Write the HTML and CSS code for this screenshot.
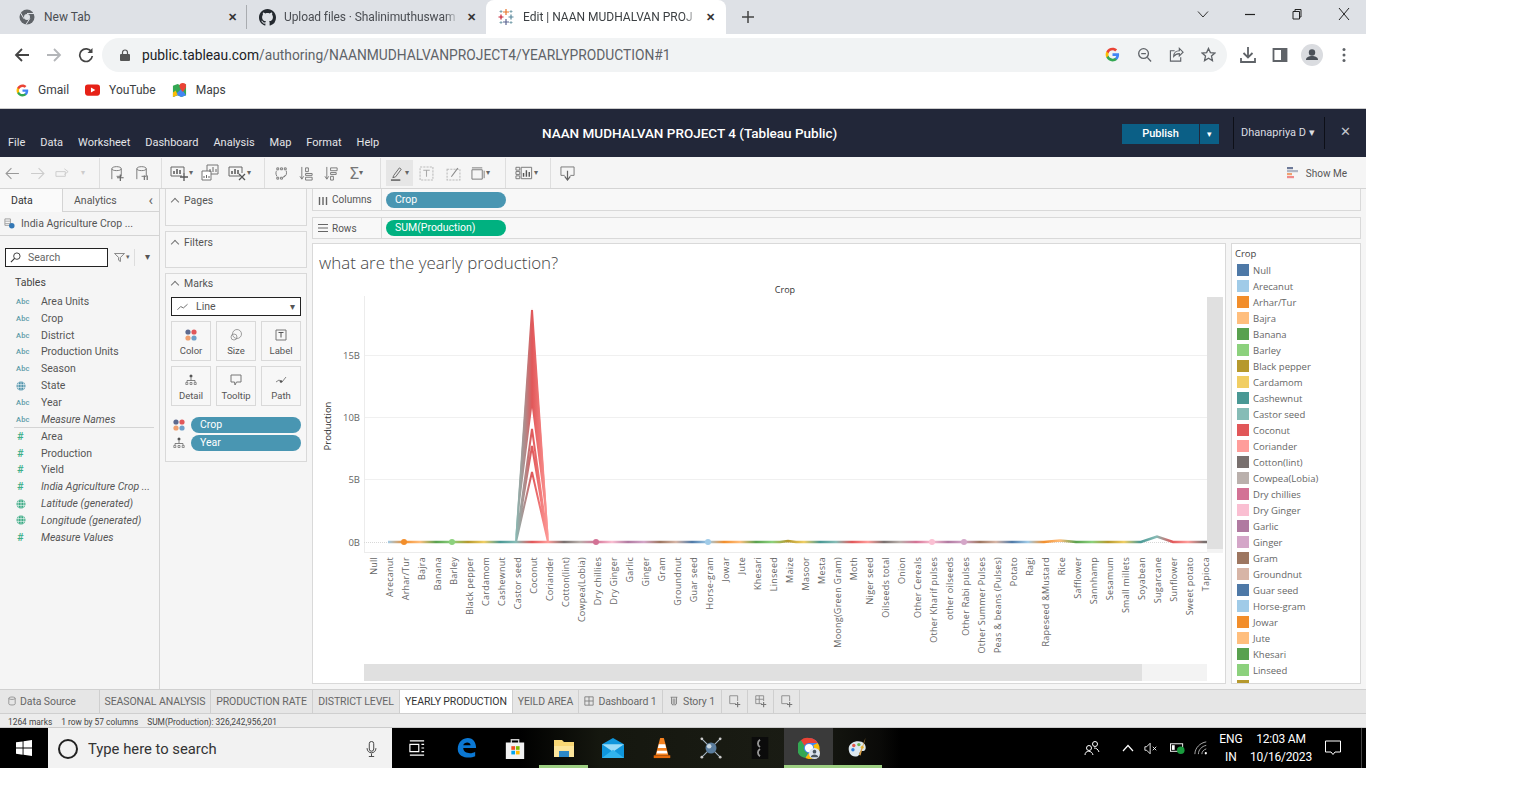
FILE: index.html
```html
<!DOCTYPE html>
<html lang="en">
<head>
<meta charset="utf-8">
<title>Edit | NAAN MUDHALVAN PROJECT 4</title>
<link rel="stylesheet" href="styles.css">
</head>
<body>
<svg class="defs" width="0" height="0" aria-hidden="true">
  <symbol id="g-logo" viewBox="0 0 48 48">
    <path fill="#4285f4" d="M45.12 24.5c0-1.56-.14-3.06-.4-4.5H24v8.51h11.84c-.51 2.75-2.06 5.08-4.39 6.64v5.52h7.11c4.16-3.83 6.56-9.47 6.56-16.17z"/>
    <path fill="#34a853" d="M24 46c5.94 0 10.92-1.97 14.56-5.33l-7.11-5.52c-1.97 1.32-4.49 2.1-7.45 2.1-5.73 0-10.58-3.87-12.31-9.07H4.34v5.7C7.96 41.07 15.4 46 24 46z"/>
    <path fill="#fbbc05" d="M11.69 28.18C11.25 26.86 11 25.45 11 24s.25-2.86.69-4.18v-5.7H4.34C2.85 17.09 2 20.45 2 24c0 3.55.85 6.91 2.34 9.88l7.35-5.7z"/>
    <path fill="#ea4335" d="M24 10.75c3.23 0 6.13 1.11 8.41 3.29l6.31-6.31C34.91 4.18 29.93 2 24 2 15.4 2 7.96 6.93 4.34 14.12l7.35 5.7c1.73-5.2 6.58-9.07 12.31-9.07z"/>
  </symbol>
  <symbol id="globe" viewBox="0 0 10 10">
    <circle cx="5" cy="5" r="4.5" fill="currentColor"/>
    <path d="M.5 3.6h9M.5 6.4h9M5 .5v9M3 1c-1.2 2.4-1.2 5.6 0 8M7 1c1.2 2.4 1.2 5.6 0 8" fill="none" stroke="#fff" stroke-width=".6"/>
  </symbol>
  <symbol id="dots" viewBox="0 0 12 12">
    <circle cx="3" cy="3" r="2.6" fill="#5d6a8f"/><circle cx="9" cy="3" r="2.6" fill="#e15759"/>
    <circle cx="3" cy="9" r="2.6" fill="#f0a070"/><circle cx="9" cy="9" r="2.6" fill="#6f9fc8"/>
  </symbol>
  <symbol id="tree" viewBox="0 0 12 12">
    <circle cx="6" cy="2" r="1.5" fill="#555"/>
    <path d="M6 3.5v3M2 8V6.5h8V8" fill="none" stroke="#666" stroke-width=".8"/>
    <path d="M.8 8.5h2v2h-2zM5 8.5h2v2H5zM9.2 8.5h2v2h-2z" fill="none" stroke="#666" stroke-width=".7"/>
  </symbol>
  <symbol id="cylinder" viewBox="0 0 18 18">
    <path d="M3 4c0-3 10-3 10 0v8H8M3 4v11M3 4c0 2.600 10 2.600 10 0" fill="none" stroke="#777"/>
  </symbol>
  <symbol id="chart-add" viewBox="0 0 20 18">
    <path d="M13 12H2V3h13v6" fill="none" stroke="#666"/>
    <path d="M5 10V7M8 10V5M11 10V6" stroke="#555" stroke-width="1.500"/>
  </symbol>
  <symbol id="tab-add" viewBox="0 0 16 16">
    <path d="M9 11H2V2h9v6" fill="none" stroke="#888"/>
    <path d="M11 9v6M8 12h6" stroke="#777" stroke-width="1.300"/>
  </symbol>
</svg>

<div class="screen">
  <nav class="tabstrip">
    <div class="tab tab-first">
      <svg class="tab-ico" viewBox="0 0 16 16"><circle cx="8" cy="8" r="7.500" fill="#5f6368"/><circle cx="8" cy="8" r="3" fill="#dee1e6"/><path d="M8 4.500h7M5 9.800 1.500 3.800M10.800 9.500 7 15.500" stroke="#dee1e6" stroke-width="1"/></svg>
      <span class="tab-text">New Tab</span><span class="tab-x">✕</span>
    </div>
    <div class="tab tab-second">
      <svg class="tab-ico gh" viewBox="0 0 16 16"><path fill="#24292f" d="M8 0C3.58 0 0 3.58 0 8c0 3.54 2.29 6.53 5.47 7.59.4.07.55-.17.55-.38 0-.19-.01-.82-.01-1.49-2.01.37-2.53-.49-2.69-.94-.09-.23-.48-.94-.82-1.13-.28-.15-.68-.52-.01-.53.63-.01 1.08.58 1.23.82.72 1.21 1.87.87 2.33.66.07-.52.28-.87.51-1.07-1.78-.2-3.64-.89-3.64-3.95 0-.87.31-1.59.82-2.15-.08-.2-.36-1.02.08-2.12 0 0 .67-.21 2.2.82.64-.18 1.32-.27 2-.27.68 0 1.36.09 2 .27 1.53-1.04 2.2-.82 2.2-.82.44 1.1.16 1.92.08 2.12.51.56.82 1.27.82 2.15 0 3.07-1.87 3.75-3.65 3.95.29.25.54.73.54 1.48 0 1.07-.01 1.93-.01 2.2 0 .21.15.46.55.38A8.013 8.013 0 0016 8c0-4.42-3.58-8-8-8z"/></svg>
      <span class="tab-text">Upload files · Shalinimuthuswam</span><span class="tab-x">✕</span>
    </div>
    <div class="tab tab-active">
      <svg class="tab-ico" viewBox="0 0 16 16"><path d="M8 0v6M5 3h6" stroke="#e8762d" stroke-width="1.200"/><path d="M8 10v6M5 13h6" stroke="#5b6591" stroke-width="1.200"/><path d="M3 5.500v5M.5 8h5" stroke="#c72035" stroke-width="1.200"/><path d="M13 5.500v5M10.500 8h5" stroke="#59879b" stroke-width="1.200"/><path d="M3 1v3M1.500 2.500h3M13 1v3M11.500 2.500h3M3 12v3M1.500 13.500h3M13 12v3M11.500 13.500h3" stroke="#7099a6" stroke-width=".8"/></svg>
      <span class="tab-text">Edit | NAAN MUDHALVAN PROJ</span><span class="tab-x">✕</span>
    </div>
    <svg class="new-tab" viewBox="0 0 12 12"><path d="M6 0v12M0 6h12" stroke="#444" stroke-width="1.500"/></svg>
    <div class="win-ctrl">
      <svg viewBox="0 0 12 12"><path d="M1 3.500 6 9l5-5.500" fill="none" stroke="#333"/></svg>
      <svg viewBox="0 0 12 12"><path d="M1 6.500h10" stroke="#222" stroke-width="1.200"/></svg>
      <svg viewBox="0 0 12 12"><path d="M2 3.500h6.500V11H2zM4 3.500V1.500h6V9H8.500" fill="none" stroke="#222"/></svg>
      <svg viewBox="0 0 12 12"><path d="M1 0 11 12M11 0 1 12" stroke="#222"/></svg>
    </div>
  </nav>

  <div class="addressbar">
    <svg class="nav-ico" viewBox="0 0 16 16"><path d="M15 8H2M8 2 2 8l6 6" fill="none" stroke="#444" stroke-width="1.800"/></svg>
    <svg class="nav-ico" viewBox="0 0 16 16"><path d="M1 8h13M8 2l6 6-6 6" fill="none" stroke="#b4b6b9" stroke-width="1.800"/></svg>
    <svg class="nav-ico" viewBox="0 0 16 16"><path d="M13.500 5A6.300 6.300 0 1 0 14.300 9" fill="none" stroke="#444" stroke-width="1.700"/><path d="M14.500 1v5h-5z" fill="#444"/></svg>
    <div class="omnibox">
      <svg class="lock" viewBox="0 0 10 12"><rect y="5" width="10" height="7" rx="1" fill="#555"/><path d="M2.500 5V3.500a2.500 2.500 0 0 1 5 0V5" fill="none" stroke="#555" stroke-width="1.200"/></svg>
      <span class="url"><b>public.tableau.com</b>/authoring/NAANMUDHALVANPROJECT4/YEARLYPRODUCTION#1</span>
      <div class="omni-icons">
        <svg viewBox="0 0 48 48"><use href="#g-logo"/></svg>
        <svg viewBox="0 0 16 16"><circle cx="7" cy="7" r="5.200" fill="none" stroke="#5f6368" stroke-width="1.400"/><path d="m11 11 4 4.500M4.500 7h5" stroke="#5f6368" stroke-width="1.400"/></svg>
        <svg viewBox="0 0 16 16"><path d="M6 4H1.500v11h11v-4M5 10c0-4 3-6 6-6V1.500l4 4-4 4V7C8.500 7 6.500 8 5 10z" fill="none" stroke="#5f6368" stroke-width="1.200"/></svg>
        <svg viewBox="0 0 16 16"><path d="m8 1.500 2 4.500 4.800.5-3.600 3.200 1 4.800L8 12l-4.200 2.500 1-4.800L1.200 6.500 6 6z" fill="none" stroke="#5f6368" stroke-width="1.400"/></svg>
      </div>
    </div>
    <div class="chrome-actions">
      <svg viewBox="0 0 16 16"><path d="M8 0v10M3.500 6 8 10.500 12.500 6M1 11v4h14v-4" fill="none" stroke="#5f6368" stroke-width="1.800"/></svg>
      <svg viewBox="0 0 16 16"><path d="M1.500 2h13v12h-13z" fill="none" stroke="#5f6368" stroke-width="1.800"/><path d="M9 2h5.500v12H9z" fill="#5f6368"/></svg>
      <svg class="avatar" viewBox="0 0 22 22"><circle cx="11" cy="11" r="11" fill="#dadce0"/><circle cx="11" cy="8.500" r="3.200" fill="#4a5058"/><path d="M5 16c0-3 3-4 6-4s6 1 6 4z" fill="#4a5058"/></svg>
      <svg viewBox="0 0 16 16"><circle cx="8" cy="2.500" r="1.500" fill="#5f6368"/><circle cx="8" cy="8" r="1.500" fill="#5f6368"/><circle cx="8" cy="13.500" r="1.500" fill="#5f6368"/></svg>
    </div>
  </div>

  <div class="bookmarks">
    <span class="bm"><svg viewBox="0 0 48 48"><use href="#g-logo"/></svg>Gmail</span>
    <span class="bm"><svg viewBox="0 0 16 12"><rect width="16" height="12" rx="3" fill="#e62117"/><path d="M6.300 3.300v5.400L11 6z" fill="#fff"/></svg>YouTube</span>
    <span class="bm"><svg viewBox="0 0 16 16"><path d="M1 3 6 1l4 2 5-2v12l-5 2-4-2-5 2z" fill="#34a853"/><path d="M1 15 10 6l5 7-5 2-4-2z" fill="#4285f4"/><path d="M6 13 1 15V10l3-2z" fill="#fbbc05"/><path d="M11.500 0a3.500 3.500 0 0 0-3.500 3.500C8 6 11.500 9.500 11.500 9.500S15 6 15 3.500A3.500 3.500 0 0 0 11.500 0z" fill="#ea4335"/></svg>Maps</span>
  </div>

  <header class="tb-header">
    <nav class="tb-menu"><span>File</span><span>Data</span><span>Worksheet</span><span>Dashboard</span><span>Analysis</span><span>Map</span><span>Format</span><span>Help</span></nav>
    <h1 class="tb-title">NAAN MUDHALVAN PROJECT 4 (Tableau Public)</h1>
    <div class="tb-right">
      <div class="publish"><span class="publish-main">Publish</span><span class="publish-caret">▾</span></div>
      <div class="tb-user">Dhanapriya D ▾</div>
      <span class="tb-close">✕</span>
    </div>
  </header>

  <div class="toolbar">
    <div class="tgroup g1">
      <span class="tool"><svg viewBox="0 0 14 14"><path d="M13 7H1M6 2 1 7l5 5" fill="none" stroke="#999"/></svg></span>
      <span class="tool"><svg viewBox="0 0 14 14"><path d="M1 7h12M8 2l5 5-5 5" fill="none" stroke="#ccc"/></svg></span>
      <span class="tool"><svg viewBox="0 0 16 14"><path d="M1 5h10v5H1zM10 2l4 3-4 3" fill="none" stroke="#ccc"/></svg></span>
      <span class="caret light">▾</span>
    </div>
    <div class="tgroup g2">
      <span class="tool"><svg viewBox="0 0 18 18"><use href="#cylinder"/><path d="M12 10v7M8.500 13.500h7" stroke="#666" stroke-width="1.300"/></svg></span>
      <span class="tool"><svg viewBox="0 0 18 18"><use href="#cylinder"/><path d="M11 11v5M14 11v5" stroke="#777" stroke-width="1.400"/></svg></span>
    </div>
    <div class="tgroup g3">
      <span class="tool wide"><svg viewBox="0 0 20 18"><use href="#chart-add"/><path d="M15 9v8M11 13h8" stroke="#555" stroke-width="1.300"/></svg><i class="caret">▾</i></span>
      <span class="tool wide"><svg viewBox="0 0 18 18"><path d="M6 1h11v9H6z" fill="none" stroke="#777"/><path d="M1 7h9v9H1z" fill="#fff" stroke="#777"/><path d="M9 8V5M12 8V3M15 8V5M3 14v-2M5.500 14v-3M8 14v-2" stroke="#666"/></svg></span>
      <span class="tool wide"><svg viewBox="0 0 20 18"><use href="#chart-add"/><path d="m12 10 6 6M18 10l-6 6" stroke="#555" stroke-width="1.300"/></svg><i class="caret">▾</i></span>
    </div>
    <div class="tgroup g4">
      <span class="tool"><svg viewBox="0 0 16 16"><path d="M3 2h2v2H3zM7 2h2v2H7zM11 2h2v2h-2zM3 12h2v2H3zM7 12h2v2H7zM13 5c1 3 0 6-3 7l1.500-2M3 11C1.500 8 2 6 3 5" fill="none" stroke="#777"/></svg></span>
      <span class="tool"><svg viewBox="0 0 16 16"><path d="M3 1v13M1 11l2 3 2-3" fill="none" stroke="#777"/><path d="M7 2h3v4H7zM7 8h7v2H7zM7 12h7v3H7z" fill="none" stroke="#777"/></svg></span>
      <span class="tool"><svg viewBox="0 0 16 16"><path d="M3 1v13M1 11l2 3 2-3" fill="none" stroke="#777"/><path d="M7 2h7v3H7zM7 7h6v2H7zM7 11h3v4H7z" fill="none" stroke="#777"/></svg></span>
      <span class="tool sigma">Σ<i class="caret">▾</i></span>
    </div>
    <div class="tgroup g5">
      <span class="tool active"><svg viewBox="0 0 16 16"><path d="m4 10 6-8 2 1.500-6 8-3 1z" fill="none" stroke="#666"/><path d="M1 15h10" stroke="#555" stroke-width="1.500"/></svg><i class="caret">▾</i></span>
      <span class="tool"><svg viewBox="0 0 14 14"><path d="M1 1h12v12H1z" fill="none" stroke="#bbb" stroke-dasharray="2 1"/><path d="M4 4h6M7 4v6" stroke="#aaa"/></svg></span>
      <span class="tool"><svg viewBox="0 0 14 14"><path d="M1 3h12v10H1z" fill="none" stroke="#bbb" stroke-dasharray="2 1"/><path d="M5 10l6-8" stroke="#888"/></svg></span>
      <span class="tool"><svg viewBox="0 0 16 14"><path d="M1 3h11v10H1zM1 1h11" fill="none" stroke="#777"/><path d="M14 4v8" stroke="#777"/></svg><i class="caret">▾</i></span>
    </div>
    <div class="tgroup g6">
      <span class="tool view-tool"><svg viewBox="0 0 20 14"><path d="M1 1h4v3H1zM1 5.500h4v3H1zM1 10h4v3H1z" fill="none" stroke="#777"/><path d="M6.500 1h11v12h-11z" fill="none" stroke="#777"/><path d="M9 11V7M12 11V4M15 11V6" stroke="#555" stroke-width="1.500"/></svg><i class="caret">▾</i></span>
    </div>
    <div class="tgroup g7">
      <span class="tool"><svg viewBox="0 0 16 16"><path d="M5 10H1V1h14v9h-4" fill="none" stroke="#777"/><path d="M8 5v9M5 11l3 4 3-4" fill="none" stroke="#666" stroke-width="1.300"/></svg></span>
    </div>
    <div class="showme">
      <svg viewBox="0 0 12 12"><rect width="6" height="2.200" fill="#6d7a99"/><rect y="3" width="11" height="2.200" fill="#b0b6c4"/><rect y="6" width="5" height="2.200" fill="#f0a070"/><rect y="9" width="7" height="2.200" fill="#ef8a8a"/></svg>
      Show Me
    </div>
  </div>

  <div class="workspace">
    <aside class="data-pane">
      <div class="pane-tabs">
        <span class="pane-tab pane-tab-on">Data</span>
        <span class="pane-tab">Analytics<i class="collapse">‹</i></span>
      </div>
      <div class="source">
        <svg viewBox="0 0 12 12"><path d="M1 1h6v7H1z" fill="none" stroke="#999"/><path d="M1 3.500h6M1 6h6" stroke="#aaa"/><circle cx="8.500" cy="8.500" r="3" fill="#3277b5"/></svg>
        India Agriculture Crop ...
      </div>
      <div class="search-row">
        <div class="search">
          <svg viewBox="0 0 12 12"><circle cx="7.500" cy="4.500" r="3.500" fill="none" stroke="#333"/><path d="M5 7 1 11" stroke="#333" stroke-width="1.200"/></svg>
          Search
        </div>
        <svg class="funnel" viewBox="0 0 12 10"><path d="M.5.500h11L7 5v4.500L5 8V5z" fill="none" stroke="#777"/></svg>
        <i class="caret">▾</i>
        <span class="search-more">▾</span>
      </div>
      <div class="tables-head">Tables</div>
      <ul class="fields">
        <li><span class="ty abc">Abc</span>Area Units</li>
        <li><span class="ty abc">Abc</span>Crop</li>
        <li><span class="ty abc">Abc</span>District</li>
        <li><span class="ty abc">Abc</span>Production Units</li>
        <li><span class="ty abc">Abc</span>Season</li>
        <li><span class="ty"><svg class="globe blue"><use href="#globe"/></svg></span>State</li>
        <li><span class="ty abc">Abc</span>Year</li>
        <li class="em"><span class="ty abc">Abc</span>Measure Names</li>
      </ul>
      <ul class="fields measures">
        <li><span class="ty num">#</span>Area</li>
        <li><span class="ty num">#</span>Production</li>
        <li><span class="ty num">#</span>Yield</li>
        <li class="em"><span class="ty num">#</span>India Agriculture Crop ...</li>
        <li class="em"><span class="ty"><svg class="globe green"><use href="#globe"/></svg></span>Latitude (generated)</li>
        <li class="em"><span class="ty"><svg class="globe green"><use href="#globe"/></svg></span>Longitude (generated)</li>
        <li class="em"><span class="ty num">#</span>Measure Values</li>
      </ul>
    </aside>

    <section class="cards">
      <div class="card card-small"><div class="card-head"><i class="chev"></i>Pages</div></div>
      <div class="card card-small"><div class="card-head"><i class="chev"></i>Filters</div></div>
      <div class="card card-marks">
        <div class="card-head"><i class="chev"></i>Marks</div>
        <div class="marktype">
          <svg viewBox="0 0 12 8"><path d="M.5 7 4 3.500 7 5l4.500-4" fill="none" stroke="#666"/></svg>
          <span>Line</span><span class="mt-caret">▾</span>
        </div>
        <div class="markgrid">
          <div class="markbtn"><svg viewBox="0 0 12 12"><use href="#dots"/></svg>Color</div>
          <div class="markbtn"><svg viewBox="0 0 12 12"><circle cx="7" cy="5" r="4.500" fill="none" stroke="#888" stroke-width=".8"/><circle cx="4" cy="8" r="3" fill="none" stroke="#888" stroke-width=".8"/></svg>Size</div>
          <div class="markbtn"><svg viewBox="0 0 12 12"><path d="M1 1h10v10H1z" fill="none" stroke="#777"/><path d="M3.500 3.500h5M6 3.500v5" stroke="#555"/></svg>Label</div>
          <div class="markbtn"><svg viewBox="0 0 12 12"><use href="#tree"/></svg>Detail</div>
          <div class="markbtn"><svg viewBox="0 0 12 12"><path d="M1 1h10v7H6.500L5 11 4.500 8H1z" fill="none" stroke="#777"/></svg>Tooltip</div>
          <div class="markbtn"><svg viewBox="0 0 12 12"><path d="M1 8l3-2 3 2 4-5" fill="none" stroke="#666" stroke-width=".8"/><circle cx="6" cy="7.500" r="1.300" fill="#555"/></svg>Path</div>
        </div>
        <div class="markpill"><svg viewBox="0 0 12 12"><use href="#dots"/></svg><span class="pill pill-blue">Crop</span></div>
        <div class="markpill"><svg viewBox="0 0 12 12"><use href="#tree"/></svg><span class="pill pill-blue">Year</span></div>
      </div>
    </section>

    <main class="view">
      <div class="shelf">
        <div class="shelf-label"><svg viewBox="0 0 10 10"><path d="M1.500 2v8M5 2v8M8.500 2v8" stroke="#666" stroke-width="1.400"/></svg>Columns</div>
        <span class="pill pill-blue pill-wide">Crop</span>
      </div>
      <div class="shelf">
        <div class="shelf-label"><svg viewBox="0 0 10 10"><path d="M0 1.500h10M0 5h10M0 8.500h10" stroke="#666" stroke-width="1.200"/></svg>Rows</div>
        <span class="pill pill-green pill-wide">SUM(Production)</span>
      </div>
      <div class="viz-row">
        <div class="viz">
          <h2 class="viz-title">what are the yearly production?</h2>
          <svg class="chart" viewBox="313 284 912 399" preserveAspectRatio="none">
            <defs>
              <linearGradient id="base" gradientUnits="userSpaceOnUse" x1="372" y1="0" x2="1204" y2="0">
                <stop offset="0" stop-color="#4e79a7"/><stop offset=".0192" stop-color="#a0cbe8"/><stop offset=".0385" stop-color="#f28e2b"/><stop offset=".0577" stop-color="#ffbe7d"/><stop offset=".0769" stop-color="#59a14f"/><stop offset=".0962" stop-color="#8cd17d"/><stop offset=".1154" stop-color="#b6992d"/><stop offset=".1346" stop-color="#f1ce63"/><stop offset=".1538" stop-color="#499894"/><stop offset=".1731" stop-color="#86bcb6"/><stop offset=".1923" stop-color="#e15759"/><stop offset=".2115" stop-color="#ff9d9a"/><stop offset=".2308" stop-color="#79706e"/><stop offset=".25" stop-color="#bab0ac"/><stop offset=".2692" stop-color="#d37295"/><stop offset=".2885" stop-color="#fabfd2"/><stop offset=".3077" stop-color="#b07aa1"/><stop offset=".3269" stop-color="#d4a6c8"/><stop offset=".3462" stop-color="#9d7660"/><stop offset=".3654" stop-color="#d7b5a6"/>
                <stop offset=".3846" stop-color="#4e79a7"/><stop offset=".4038" stop-color="#a0cbe8"/><stop offset=".4231" stop-color="#f28e2b"/><stop offset=".4423" stop-color="#ffbe7d"/><stop offset=".4615" stop-color="#59a14f"/><stop offset=".4808" stop-color="#8cd17d"/><stop offset=".5" stop-color="#b6992d"/><stop offset=".5192" stop-color="#f1ce63"/><stop offset=".5385" stop-color="#499894"/><stop offset=".5577" stop-color="#86bcb6"/><stop offset=".5769" stop-color="#e15759"/><stop offset=".5962" stop-color="#ff9d9a"/><stop offset=".6154" stop-color="#79706e"/><stop offset=".6346" stop-color="#bab0ac"/><stop offset=".6538" stop-color="#d37295"/><stop offset=".6731" stop-color="#fabfd2"/><stop offset=".6923" stop-color="#b07aa1"/><stop offset=".7115" stop-color="#d4a6c8"/><stop offset=".7308" stop-color="#9d7660"/><stop offset=".75" stop-color="#d7b5a6"/>
                <stop offset=".7692" stop-color="#4e79a7"/><stop offset=".7885" stop-color="#a0cbe8"/><stop offset=".8077" stop-color="#f28e2b"/><stop offset=".8269" stop-color="#ffbe7d"/><stop offset=".8462" stop-color="#59a14f"/><stop offset=".8654" stop-color="#8cd17d"/><stop offset=".8846" stop-color="#b6992d"/><stop offset=".9038" stop-color="#f1ce63"/><stop offset=".9231" stop-color="#499894"/><stop offset=".9423" stop-color="#86bcb6"/><stop offset=".9615" stop-color="#e15759"/><stop offset=".9808" stop-color="#ff9d9a"/><stop offset="1" stop-color="#79706e"/>
              </linearGradient>
              <linearGradient id="spike" gradientUnits="userSpaceOnUse" x1="515" y1="0" x2="549" y2="0">
                <stop offset="0" stop-color="#86bcb6"/><stop offset=".3" stop-color="#b08a8a"/><stop offset=".5" stop-color="#e15759"/><stop offset="1" stop-color="#ff9d9a"/>
              </linearGradient>
            </defs>
            <text class="col-head" x="785" y="293">Crop</text>
            <g class="grid">
              <path d="M364 355.500H1207M364 417.500H1207M364 479.500H1207"/>
              <path class="axis" d="M364.500 296V552M364 552.500H1207"/>
              <path class="zero" d="M364 542.500H1207"/>
            </g>
            <g class="yticks">
              <text x="360" y="359">15B</text><text x="360" y="421">10B</text><text x="360" y="483">5B</text><text x="360" y="546">0B</text>
            </g>
            <text class="ytitle" transform="translate(331 426) rotate(-90)">Production</text>
            <path class="line-base" d="M388 542H780L788 541 796 542H1044L1060 540.500 1076 542H1141L1157 536.500 1173 542H1220"/>
            <path class="spike-fill" d="M515 542 532 308 549 542 532 408z"/>
            <path class="spike-line" d="M516 542 532 429 548 542M516 542 532 446 548 542M516 542 532 472 548 542M516 542 532 310 548 542"/>
            <circle cx="404" cy="542" r="3" fill="#f28e2b"/><circle cx="452" cy="542" r="3" fill="#8cd17d"/><circle cx="596" cy="542" r="3" fill="#d37295"/><circle cx="708" cy="542" r="3" fill="#a0cbe8"/><circle cx="932" cy="542" r="3" fill="#fabfd2"/><circle cx="964" cy="542" r="3" fill="#d4a6c8"/>
            <g class="xlabels">
              <text transform="translate(377 557) rotate(-90)">Null</text><text transform="translate(393 557) rotate(-90)">Arecanut</text><text transform="translate(409 557) rotate(-90)">Arhar/Tur</text><text transform="translate(425 557) rotate(-90)">Bajra</text><text transform="translate(441 557) rotate(-90)">Banana</text><text transform="translate(457 557) rotate(-90)">Barley</text><text transform="translate(473 557) rotate(-90)">Black pepper</text><text transform="translate(489 557) rotate(-90)">Cardamom</text><text transform="translate(505 557) rotate(-90)">Cashewnut</text><text transform="translate(521 557) rotate(-90)">Castor seed</text><text transform="translate(537 557) rotate(-90)">Coconut</text><text transform="translate(553 557) rotate(-90)">Coriander</text><text transform="translate(569 557) rotate(-90)">Cotton(lint)</text><text transform="translate(585 557) rotate(-90)">Cowpea(Lobia)</text><text transform="translate(601 557) rotate(-90)">Dry chillies</text><text transform="translate(617 557) rotate(-90)">Dry Ginger</text><text transform="translate(633 557) rotate(-90)">Garlic</text><text transform="translate(649 557) rotate(-90)">Ginger</text><text transform="translate(665 557) rotate(-90)">Gram</text><text transform="translate(681 557) rotate(-90)">Groundnut</text><text transform="translate(697 557) rotate(-90)">Guar seed</text><text transform="translate(713 557) rotate(-90)">Horse-gram</text><text transform="translate(729 557) rotate(-90)">Jowar</text><text transform="translate(745 557) rotate(-90)">Jute</text><text transform="translate(761 557) rotate(-90)">Khesari</text><text transform="translate(777 557) rotate(-90)">Linseed</text><text transform="translate(793 557) rotate(-90)">Maize</text><text transform="translate(809 557) rotate(-90)">Masoor</text><text transform="translate(825 557) rotate(-90)">Mesta</text><text transform="translate(841 557) rotate(-90)">Moong(Green Gram)</text><text transform="translate(857 557) rotate(-90)">Moth</text><text transform="translate(873 557) rotate(-90)">Niger seed</text><text transform="translate(889 557) rotate(-90)">Oilseeds total</text><text transform="translate(905 557) rotate(-90)">Onion</text><text transform="translate(921 557) rotate(-90)">Other Cereals</text><text transform="translate(937 557) rotate(-90)">Other Kharif pulses</text><text transform="translate(953 557) rotate(-90)">other oilseeds</text><text transform="translate(969 557) rotate(-90)">Other Rabi pulses</text><text transform="translate(985 557) rotate(-90)">Other Summer Pulses</text><text transform="translate(1001 557) rotate(-90)">Peas &amp; beans (Pulses)</text><text transform="translate(1017 557) rotate(-90)">Potato</text><text transform="translate(1033 557) rotate(-90)">Ragi</text><text transform="translate(1049 557) rotate(-90)">Rapeseed &amp;Mustard</text><text transform="translate(1065 557) rotate(-90)">Rice</text><text transform="translate(1081 557) rotate(-90)">Safflower</text><text transform="translate(1097 557) rotate(-90)">Sannhamp</text><text transform="translate(1113 557) rotate(-90)">Sesamum</text><text transform="translate(1129 557) rotate(-90)">Small millets</text><text transform="translate(1145 557) rotate(-90)">Soyabean</text><text transform="translate(1161 557) rotate(-90)">Sugarcane</text><text transform="translate(1177 557) rotate(-90)">Sunflower</text><text transform="translate(1193 557) rotate(-90)">Sweet potato</text><text transform="translate(1209 557) rotate(-90)">Tapioca</text>
            </g>
            <rect class="sb-track" x="1207" y="297" width="16" height="256"/>
            <rect class="sb-thumb" x="1207" y="297" width="16" height="252"/>
            <rect class="sb-track" x="364" y="664" width="843" height="17"/>
            <rect class="sb-thumb" x="364" y="664" width="778" height="17"/>
          </svg>
        </div>
        <aside class="legend">
          <div class="legend-title">Crop</div>
          <ul class="legend-list">
            <li><i class="sw c1"></i>Null</li><li><i class="sw c2"></i>Arecanut</li><li><i class="sw c3"></i>Arhar/Tur</li><li><i class="sw c4"></i>Bajra</li><li><i class="sw c5"></i>Banana</li><li><i class="sw c6"></i>Barley</li><li><i class="sw c7"></i>Black pepper</li><li><i class="sw c8"></i>Cardamom</li><li><i class="sw c9"></i>Cashewnut</li><li><i class="sw c10"></i>Castor seed</li><li><i class="sw c11"></i>Coconut</li><li><i class="sw c12"></i>Coriander</li><li><i class="sw c13"></i>Cotton(lint)</li><li><i class="sw c14"></i>Cowpea(Lobia)</li><li><i class="sw c15"></i>Dry chillies</li><li><i class="sw c16"></i>Dry Ginger</li><li><i class="sw c17"></i>Garlic</li><li><i class="sw c18"></i>Ginger</li><li><i class="sw c19"></i>Gram</li><li><i class="sw c20"></i>Groundnut</li><li><i class="sw c1"></i>Guar seed</li><li><i class="sw c2"></i>Horse-gram</li><li><i class="sw c3"></i>Jowar</li><li><i class="sw c4"></i>Jute</li><li><i class="sw c5"></i>Khesari</li><li><i class="sw c6"></i>Linseed</li><li class="legend-cut"><i class="sw c7"></i></li>
          </ul>
        </aside>
      </div>
    </main>
  </div>

  <div class="sheetbar">
    <span class="sheet ds"><svg viewBox="0 0 10 12"><path d="M1 2.500c0-2 8-2 8 0v7c0 2-8 2-8 0zM1 2.500c0 2 8 2 8 0" fill="none" stroke="#888"/></svg>Data Source</span>
    <span class="sheet s1">SEASONAL ANALYSIS</span>
    <span class="sheet s2">PRODUCTION RATE</span>
    <span class="sheet s3">DISTRICT LEVEL</span>
    <span class="sheet s4 on">YEARLY PRODUCTION</span>
    <span class="sheet s5">YEILD AREA</span>
    <span class="sheet s6"><svg viewBox="0 0 12 12"><path d="M1 1h10v10H1zM6 1v10M1 6h10" fill="none" stroke="#777"/></svg>Dashboard 1</span>
    <span class="sheet s7"><svg viewBox="0 0 12 12"><path d="M2 1.500h8M3 1.500v8l2 1.500V3M9 1.500v8L7 11V3" fill="none" stroke="#777"/></svg>Story 1</span>
    <span class="sheet add"><svg viewBox="0 0 16 16"><use href="#tab-add"/></svg></span>
    <span class="sheet add"><svg viewBox="0 0 16 16"><use href="#tab-add"/><path d="M2 6h9M6 2v9" stroke="#888"/></svg></span>
    <span class="sheet add"><svg viewBox="0 0 16 16"><use href="#tab-add"/></svg></span>
  </div>
  <div class="statusbar"><span>1264 marks</span><span>1 row by 57 columns</span><span>SUM(Production): 326,242,956,201</span></div>

  <footer class="taskbar">
    <svg class="win" viewBox="0 0 16 16"><path d="M0 2.300 6.600 1.400v6.200H0zM7.500 1.300 16 0v7.600H7.500zM0 8.500h6.600v6.200L0 13.700zM7.500 8.500H16V16l-8.500-1.200z" fill="#fff"/></svg>
    <div class="tsearch">
      <i class="cortana"></i>
      <span>Type here to search</span>
      <svg class="mic" viewBox="0 0 12 18"><rect x="3.500" y=".5" width="5" height="11" rx="2.500" fill="none" stroke="#333"/><path d="M1 8c0 7 10 7 10 0M6 14v3M3 17.500h6" fill="none" stroke="#333"/></svg>
    </div>
    <div class="tapps">
      <span class="tapp"><svg viewBox="0 0 18 18"><path d="M1 1h16M1 17h16M1 5h10v8H1zM14 5h3M14 9h3M14 13h3" fill="none" stroke="#fff" stroke-width="1.300"/></svg></span>
      <span class="tapp"><svg viewBox="0 0 24 24"><path d="M3 13C3 5 9 1 14 1c6 0 9 5 9 11H9c0 6 9 7 13 4v5c-6 3-19 2-19-8zm6-4h8c0-4-7-4-8 0z" fill="#0b78d4"/></svg></span>
      <span class="tapp"><svg viewBox="0 0 20 24"><path d="M6 7V3h8v4" fill="none" stroke="#ccc" stroke-width="1.500"/><rect y="6" width="20" height="18" fill="#f2f2f2"/><rect x="6" y="10" width="4" height="4" fill="#f25022"/><rect x="11" y="10" width="4" height="4" fill="#7fba00"/><rect x="6" y="15" width="4" height="4" fill="#00a4ef"/><rect x="11" y="15" width="4" height="4" fill="#ffb900"/></svg></span>
      <span class="tapp run"><svg viewBox="0 0 22 22"><path d="M1 3h8l2 2h10v15H1z" fill="#f8d775"/><path d="M1 9h20v11H1z" fill="#fce59b"/><rect x="6" y="14" width="10" height="6" fill="#2d89c8"/></svg></span>
      <span class="tapp"><svg viewBox="0 0 24 22"><path d="M0 7 12 0l12 7v15H0z" fill="#0f96dc"/><path d="M0 7l12 8 12-8" fill="#9bdcf7"/><path d="M0 22l12-9 12 9z" fill="#31b4ee"/></svg></span>
      <span class="tapp"><svg viewBox="0 0 20 24"><path d="M8 1h4l5 19H3z" fill="#f58220"/><path d="M6.500 8h7l1 4h-9zM4.800 15h10.400l.8 3H4z" fill="#fff"/><path d="M1 20h18v3H1z" fill="#e66a0a"/></svg></span>
      <span class="tapp"><svg viewBox="0 0 24 24"><path d="M2 2l20 20M22 2 2 22" stroke="#a5b4c2" stroke-width="1.200"/><circle cx="12" cy="12" r="6" fill="#5a7d9e"/><circle cx="10" cy="10" r="2.500" fill="#c8d6e0"/><circle cx="2" cy="2" r="1.500" fill="#ccc"/><circle cx="22" cy="2" r="1.500" fill="#ccc"/><circle cx="2" cy="22" r="1.500" fill="#ccc"/><circle cx="22" cy="22" r="1.500" fill="#ccc"/></svg></span>
      <span class="tapp"><svg viewBox="0 0 18 24"><rect width="18" height="24" fill="#0b0b0b"/><path d="M9 3c-3 2-3 6 0 8M9 13c-3 2-3 6 0 8" fill="none" stroke="#999" stroke-width="2"/></svg></span>
      <span class="tapp run hi"><svg viewBox="0 0 24 24"><circle cx="12" cy="12" r="11" fill="#4285f4"/><path d="M12 1a11 11 0 0 1 9.500 5.500H12a5.500 5.500 0 0 0-5 3L3 3.500A11 11 0 0 1 12 1z" fill="#ea4335"/><path d="M3 3.500 7 9.500a5.500 5.500 0 0 0 4 8l-3 5.500A11 11 0 0 1 3 3.500z" fill="#34a853"/><path d="M21.500 6.500A11 11 0 0 1 8 23l4-5.500a5.500 5.500 0 0 0 4.500-8.500z" fill="#fbbc05"/><circle cx="12" cy="12" r="4.500" fill="#fff"/><circle cx="18" cy="18" r="6" fill="#dbe4ee"/><circle cx="18" cy="16" r="2" fill="#47545f"/><path d="M14 22c0-2 2-3 4-3s4 1 4 3z" fill="#47545f"/></svg></span>
      <span class="tapp run"><svg viewBox="0 0 26 26"><path d="M2 14C2 8 8 5 13 5c6 0 10 4 9 9-1 4-4 2-6 3s0 5-5 6c-6 1-9-4-9-9z" fill="#dce7ee"/><circle cx="8" cy="10" r="2" fill="#e2574c"/><circle cx="14" cy="9" r="2" fill="#6bb34f"/><circle cx="7" cy="15" r="2" fill="#2f7ed8"/><circle cx="18" cy="12" r="1.800" fill="#f2c230"/><path d="M22 1 14 21l2 1z" fill="#d8a049"/></svg></span>
    </div>
    <div class="tray">
      <svg class="tr-people" viewBox="0 0 16 16"><circle cx="11" cy="4" r="2.500" fill="none" stroke="#fff"/><circle cx="5" cy="8" r="2.500" fill="none" stroke="#fff"/><path d="M1 15c0-5 7-5 8 0M10 8c2 0 4 1 5 4" fill="none" stroke="#fff"/></svg>
      <svg class="tr-up" viewBox="0 0 12 8"><path d="m1 7 5-5.500L11 7" fill="none" stroke="#fff" stroke-width="1.200"/></svg>
      <svg class="tr-vol" viewBox="0 0 16 14"><path d="M1 5h2l4-4v12L3 9H1zM10 5l4 4M14 5l-4 4" fill="none" stroke="#fff"/></svg>
      <svg class="tr-bat" viewBox="0 0 16 14"><rect x=".5" y="2.500" width="13" height="8" fill="none" stroke="#fff"/><rect x="2" y="4" width="3" height="5" fill="#fff"/><circle cx="11.500" cy="9.500" r="4" fill="#1a9c3e"/></svg>
      <svg class="tr-wifi" viewBox="0 0 16 16"><path d="M1 15C1 8 7 2 14 1M5 15c0-5 4-9 9-10M9 15c0-3 2-5 5-6" fill="none" stroke="#bbb"/><circle cx="13.500" cy="14" r="1.300" fill="#fff"/></svg>
      <div class="tr-lang"><span>ENG</span><span>IN</span></div>
      <div class="tr-time"><span>12:03 AM</span><span>10/16/2023</span></div>
      <svg class="tr-note" viewBox="0 0 16 16"><path d="M.5 1h15v11H10l-2 2.500L6 12H.5z" fill="none" stroke="#fff"/></svg>
    </div>
  </footer>
</div>
</body>
</html>
```
FILE: styles.css
```css
* { box-sizing: border-box; }
html, body { margin: 0; padding: 0; background: #fff; }
body { font-family: Roboto, "Open Sans", "Liberation Sans", sans-serif; color: #333; overflow: hidden; }
ul { list-style: none; margin: 0; padding: 0; }
i { font-style: normal; }
h1, h2 { margin: 0; font-weight: normal; }
.defs { position: absolute; }
.screen { width: 1366px; height: 768px; display: flex; flex-direction: column; overflow: hidden; }

/* browser tabs */
.tabstrip { height: 34px; background: #dee1e6; display: flex; align-items: stretch; flex: none; }
.tab { display: flex; align-items: center; font-size: 12px; color: #4a4d52; height: 34px; }
.tab-first { width: 247px; padding: 0 9px 0 19px; border-right: 1px solid #a9acb0; height: 24px; margin-top: 5px; }
.tab-second { width: 239px; padding: 0 10px 0 12px; height: 24px; margin-top: 5px; }
.tab-active { width: 240px; padding: 0 11px 0 12px; background: #fff; border-radius: 8px 8px 0 0; color: #3c4043; }
.tab-ico { width: 16px; height: 16px; flex: none; margin-right: 9px; }
.gh { width: 17px; height: 17px; margin-right: 8px; }
.tab-text { flex: 1; white-space: nowrap; overflow: hidden; }
.tab-second .tab-text { letter-spacing: -.1px; }
.tab-second .tab-text, .tab-active .tab-text { -webkit-mask-image: linear-gradient(90deg, #000 calc(100% - 14px), transparent); mask-image: linear-gradient(90deg, #000 calc(100% - 14px), transparent); }
.tab-x { flex: none; font-size: 11px; color: #333; margin-left: 8px; font-weight: 700; }
.new-tab { width: 12px; height: 12px; margin: 11px 0 0 16px; flex: none; }
.win-ctrl { margin-left: auto; display: flex; gap: 35px; padding: 8px 16px 0 0; }
.win-ctrl svg { width: 12px; height: 12px; }

/* address bar */
.addressbar { height: 41px; display: flex; align-items: center; flex: none; padding-left: 14px; background: #fff; }
.nav-ico { width: 16px; height: 16px; margin-right: 16px; flex: none; }
.omnibox { width: 1125px; height: 34px; margin-left: -8px; border-radius: 17px; background: #f1f3f4; display: flex; align-items: center; padding: 0 11px 0 18px; }
.lock { width: 10px; height: 12px; margin-right: 12px; flex: none; }
.url { font-size: 13.800px; color: #5f6368; white-space: nowrap; }
.url b { font-weight: 400; color: #202124; }
.omni-icons { margin-left: auto; display: flex; gap: 17px; align-items: center; }
.omni-icons svg { width: 15px; height: 15px; }
.chrome-actions { display: flex; align-items: center; gap: 16px; margin-left: 13px; }
.chrome-actions svg { width: 16px; height: 16px; }
.chrome-actions .avatar { width: 22px; height: 22px; margin: 0 -3px; }

/* bookmarks */
.bookmarks { height: 34px; flex: none; display: flex; align-items: center; gap: 16px; padding: 0 0 3px 16px; font-size: 12px; color: #3c4043; background: #fff; border-bottom: 1px solid #ccc; }
.bm { display: flex; align-items: center; gap: 9px; }
.bm svg { width: 13px; height: 13px; }
.bm:nth-child(2) svg { width: 15px; height: 12px; }
.bm:nth-child(3) svg { width: 15px; height: 15px; }

/* tableau header */
.tb-header { height: 48px; flex: none; background: #222739; color: #fff; display: flex; position: relative; }
.tb-menu { display: flex; gap: 15px; padding: 27px 0 0 8px; font-size: 11px; color: #e4e5e8; }
.tb-title { position: absolute; left: 542px; top: 16px; font-size: 13.500px; font-weight: 500; color: #fff; white-space: nowrap; }
.tb-right { margin-left: auto; display: flex; align-items: center; font-size: 11px; }
.publish { display: flex; height: 20px; margin-top: 1px; }
.publish-main { width: 77px; background: #0b5f86; text-align: center; line-height: 20px; font-weight: 500; }
.publish-caret { width: 19px; margin-left: 1px; background: #0b5f86; text-align: center; line-height: 20px; font-size: 9px; }
.tb-user { height: 32px; margin-left: 14px; padding: 0 10px 0 7px; border-left: 1px solid #0d0f17; border-right: 1px solid #0d0f17; line-height: 32px; color: #dcdde1; width: 92px; white-space: nowrap; }
.tb-close { width: 41px; text-align: center; color: #c4c6cd; font-size: 13px; margin-top: -3px; }

/* tableau toolbar */
.toolbar { height: 32px; flex: none; background: #f5f5f5; border-bottom: 1px solid #d4d4d4; display: flex; align-items: center; padding-top: 1px; }
.tgroup { display: flex; align-items: center; height: 30px; border-right: 1px solid #dedede; }
.g1 { width: 100px; }
.g2 { width: 62px; padding-left: 5px; }
.g3 { width: 103px; padding-left: 5px; gap: 1px; }
.g4 { width: 116px; padding-left: 4px; }
.g5 { width: 125px; padding-left: 5px; }
.g6 { width: 45px; padding-left: 3px; }
.g7 { width: 40px; padding-left: 4px; border-right: 0; }
.tool { width: 25px; height: 26px; display: flex; align-items: center; justify-content: center; flex: none; }
.tool svg { width: 15px; height: 15px; }
.g2 .tool svg { width: 17px; height: 17px; }
.g5 .tool { width: 27px; }
.g5 .tool svg { width: 15px; height: 15px; }
.tool.wide { width: 28px; }
.tool.wide svg { width: 20px; height: 18px; }
.tool.active { background: #e6e6e6; }
.tool.view-tool { width: 34px; }
.tool.view-tool svg { width: 19px; height: 14px; }
.sigma { font-size: 16px; color: #777; }
.caret { font-size: 8px; color: #666; line-height: 1; }
.caret.light { color: #ccc; width: 15px; text-align: center; }
.showme { margin-left: auto; padding-right: 19px; display: flex; align-items: center; gap: 7px; font-size: 10px; color: #555; }
.showme svg { width: 12px; height: 12px; }

/* workspace */
.workspace { height: 500px; flex: none; display: flex; background: #f5f5f5; }
.data-pane { width: 160px; flex: none; border-right: 1px solid #d4d4d4; font-size: 10.500px; color: #555; }
.pane-tabs { display: flex; height: 23px; }
.pane-tab { display: flex; align-items: center; border-bottom: 1px solid #d4d4d4; padding-left: 11px; width: 96px; color: #555; position: relative; }
.pane-tab-on { width: 63px; border-right: 1px solid #d4d4d4; border-bottom: 0; color: #333; background: #fafafa; }
.collapse { position: absolute; right: 6px; top: 2px; font-size: 15px; color: #666; }
.source { height: 24px; display: flex; align-items: center; gap: 6px; padding-left: 4px; border-bottom: 1px solid #d4d4d4; }
.source svg { width: 11px; height: 11px; }
.search-row { display: flex; align-items: center; margin: 12px 0 0 5px; height: 19px; }
.search { width: 103px; height: 19px; border: 1px solid #222; background: #fff; display: flex; align-items: center; gap: 7px; padding-left: 4px; color: #666; }
.search svg { width: 11px; height: 11px; }
.funnel { width: 11px; height: 9px; margin-left: 6px; }
.search-row .caret { margin-left: 1px; font-size: 7px; }
.search-more { margin-left: 4px; padding-left: 10px; border-left: 1px solid #ddd; height: 17px; line-height: 16px; color: #555; font-size: 10px; }
.tables-head { margin: 9px 0 0 15px; height: 14px; line-height: 14px; color: #444; }
.fields { margin: 3px 5px 0 14px; }
.fields li { height: 16.850px; display: flex; align-items: center; white-space: nowrap; }
.fields .em { font-style: italic; }
.measures { margin-top: -1px; border-top: 1px solid #d4d4d4; }
.ty { width: 27px; flex: none; display: flex; align-items: center; padding-left: 2px; font-style: normal; }
.abc { font-size: 7.500px; color: #5d9ba8; letter-spacing: .2px; font-weight: 500; }
.num { font-size: 11px; color: #3bae88; padding-left: 3px; font-weight: 500; }
.globe { width: 10px; height: 10px; }
.globe.blue { color: #4c90a8; }
.globe.green { color: #36a781; }

/* cards */
.cards { width: 152px; flex: none; padding: 0 5px; display: flex; flex-direction: column; gap: 5px; font-size: 10.500px; color: #555; border-right: 0; }
.card { background: #f7f7f7; border: 1px solid #d9d9d9; }
.card-small { height: 37px; }
.card-small:first-child { border-top: 0; }
.card-head { height: 21px; display: flex; align-items: center; padding-left: 6px; gap: 6px; color: #555; }
.card-small:first-child .card-head { height: 22px; }
.chev { width: 6px; height: 6px; border-left: 1px solid #777; border-top: 1px solid #777; transform: rotate(45deg); margin-top: 3px; }
.card-marks { height: 189px; padding: 0 5px; }
.card-marks .card-head { padding-left: 1px; height: 19px; }
.marktype { height: 19px; border: 1px solid #222; background: #fff; display: flex; align-items: center; padding: 0 5px 0 5px; gap: 8px; color: #555; margin-top: 4px; }
.marktype svg { width: 11px; height: 8px; }
.mt-caret { margin-left: auto; font-size: 10px; color: #555; }
.markgrid { display: grid; grid-template-columns: repeat(3, 40px); grid-auto-rows: 40px; gap: 5px; margin-top: 5px; }
.markbtn { border: 1px solid #d9d9d9; background: #f7f7f7; display: flex; flex-direction: column; align-items: center; justify-content: flex-end; padding-bottom: 4px; font-size: 9.500px; gap: 4px; color: #555; }
.markbtn svg { width: 12px; height: 12px; }
.markpill { display: flex; align-items: center; height: 16px; margin-top: 2px; gap: 4px; padding-left: 2px; }
.markgrid + .markpill { margin-top: 11px; }
.markpill svg { width: 12px; height: 12px; flex: none; }
.pill { display: block; height: 16px; line-height: 16px; border-radius: 8px; color: #fff; font-size: 10.500px; padding-left: 9px; }
.markpill .pill { width: 110px; margin-left: 2px; }
.pill-blue { background: #4996b2; }
.pill-green { background: #00b180; }
.pill-wide { width: 120px; }

/* view */
.view { width: 1049px; flex: none; display: flex; flex-direction: column; }
.shelf { height: 22px; border: 1px solid #d9d9d9; background: #f8f8f8; display: flex; align-items: center; margin-bottom: 6px; }
.shelf:first-child { border-top: 0; }
.shelf + .shelf { margin-bottom: 4px; }
.shelf-label { width: 69px; height: 100%; border-right: 1px solid #d9d9d9; display: flex; align-items: center; gap: 4px; padding-left: 5px; font-size: 10px; color: #555; margin-right: 4px; }
.shelf-label svg { width: 10px; height: 10px; }
.viz-row { display: flex; gap: 5px; height: 441px; }
.viz { width: 914px; height: 441px; background: #fff; border: 1px solid #d9d9d9; display: flex; flex-direction: column; }
.viz-title { height: 40px; flex: none; padding: 9px 0 0 6px; font-family: "Open Sans", sans-serif; font-weight: 300; font-size: 16.900px; color: #444; line-height: 20px; white-space: nowrap; }
.chart { width: 912px; height: 399px; display: block; flex: none; }
.chart text { font-family: "Open Sans", sans-serif; }
.col-head { font-size: 9px; fill: #333; text-anchor: middle; }
.grid path { fill: none; stroke: #f0f0f0; stroke-width: 1; }
.grid .axis { stroke: #ececec; }
.grid .zero { stroke: #d8d8d8; stroke-dasharray: 1 1; }
.yticks text { font-size: 9.500px; fill: #666; text-anchor: end; }
.ytitle { font-size: 9.500px; fill: #333; text-anchor: middle; }
.line-base { fill: none; stroke: url(#base); stroke-width: 2.500; }
.spike-fill { fill: url(#spike); }
.spike-line { fill: none; stroke: url(#spike); stroke-width: 2; }
.xlabels text { font-size: 9px; fill: #666; text-anchor: end; letter-spacing: .25px; }
.sb-track { fill: #f3f3f3; }
.sb-thumb { fill: #e0e0e0; }

/* legend */
.legend { width: 130px; height: 441px; background: #fff; border: 1px solid #d9d9d9; overflow: hidden; font-family: "Open Sans", sans-serif; font-size: 9.500px; color: #666; }
.legend-title { height: 18px; padding: 4px 0 0 3px; color: #444; line-height: 12px; }
.legend-list { padding-left: 5px; }
.legend-list li { height: 16px; display: flex; align-items: center; gap: 4px; }
.legend-list .legend-cut { align-items: flex-start; padding-top: 2px; }
.sw { width: 12px; height: 12px; flex: none; }
.c1 { background: #4e79a7; } .c2 { background: #a0cbe8; } .c3 { background: #f28e2b; } .c4 { background: #ffbe7d; } .c5 { background: #59a14f; }
.c6 { background: #8cd17d; } .c7 { background: #b6992d; } .c8 { background: #f1ce63; } .c9 { background: #499894; } .c10 { background: #86bcb6; }
.c11 { background: #e15759; } .c12 { background: #ff9d9a; } .c13 { background: #79706e; } .c14 { background: #bab0ac; } .c15 { background: #d37295; }
.c16 { background: #fabfd2; } .c17 { background: #b07aa1; } .c18 { background: #d4a6c8; } .c19 { background: #9d7660; } .c20 { background: #d7b5a6; }

/* sheet tabs */
.sheetbar { height: 25px; flex: none; background: #e6e6e6; border-top: 1px solid #d0d0d0; border-bottom: 1px solid #cfcfcf; display: flex; font-size: 10.500px; color: #666; letter-spacing: -.1px; }
.sheet { display: flex; align-items: center; justify-content: center; gap: 4px; border-right: 1px solid #cfcfcf; white-space: nowrap; flex: none; padding-bottom: 1px; }
.ds { width: 100px; justify-content: flex-start; padding-left: 8px; }
.ds svg { width: 8px; height: 10px; }
.s1 { width: 111px; } .s2 { width: 102px; } .s3 { width: 87px; } .s4 { width: 113px; } .s5 { width: 66px; } .s6 { width: 84px; } .s7 { width: 59px; }
.s6 svg, .s7 svg { width: 10px; height: 10px; }
.sheet.on { background: #fff; color: #333; }
.sheet.add { width: 26px; }
.sheet.add svg { width: 14px; height: 14px; }
.statusbar { height: 14px; flex: none; background: #ececec; border-bottom: 1px solid #ccc; display: flex; gap: 9px; padding: 2px 0 0 8px; font-size: 8.400px; color: #444; line-height: 12px; }

/* taskbar */
.taskbar { height: 40px; flex: none; background: linear-gradient(90deg, #000 0 520px, #15170f 600px, #1a1c14 800px, #0a0a08 880px, #000 900px); display: flex; align-items: stretch; color: #fff; position: relative; }
.taskbar::after { content: ""; position: absolute; right: 4px; top: 0; bottom: 0; width: 1px; background: #444; }
.win { width: 16px; height: 16px; margin: 12px 16px 0 16px; flex: none; }
.tsearch { width: 344px; background: #f2f2f2; display: flex; align-items: center; padding: 1px 0 0 10px; color: #333; font-size: 14.800px; flex: none; }
.cortana { width: 20px; height: 20px; border: 2.500px solid #222; border-radius: 50%; margin-right: 10px; }
.mic { width: 11px; height: 16px; margin-left: auto; margin-right: 15px; }
.tapps { display: flex; margin-left: 0; }
.tapp { width: 49px; display: flex; align-items: center; justify-content: center; }
.tapp svg { width: 22px; height: 22px; }
.tapp:first-child svg { width: 16px; height: 16px; }
.tapp.run { border-bottom: 3px solid #9dcf82; padding-top: 3px; }
.tapp.hi { background: #3a3a3a; }
.tray { margin-left: auto; display: flex; align-items: center; font-size: 12px; padding-right: 0; }
.tray svg { flex: none; }
.tr-people { width: 16px; height: 16px; margin-right: 22px; }
.tr-up { width: 12px; height: 8px; margin-right: 10px; }
.tr-vol { width: 14px; height: 13px; margin-right: 12px; }
.tr-bat { width: 15px; height: 14px; margin-right: 9px; }
.tr-wifi { width: 14px; height: 14px; margin-right: 11px; }
.tr-lang, .tr-time { display: flex; flex-direction: column; align-items: center; line-height: 18px; }
.tr-lang { width: 24px; }
.tr-time { width: 58px; margin-left: 9px; letter-spacing: -.2px; }
.tr-note { width: 16px; height: 16px; margin: 0 25px 0 15px; }
```
